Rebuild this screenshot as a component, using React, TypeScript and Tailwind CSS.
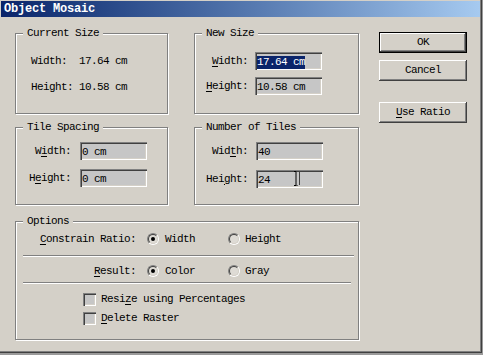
import React from "react";

const sunken =
  "shadow-[inset_1px_1px_0_#808080,inset_2px_2px_0_#404040,inset_-1px_-1px_0_#ffffff,inset_-2px_-2px_0_#d4d0c8]";
const raised =
  "shadow-[inset_-1px_-1px_0_#404040,inset_1px_1px_0_#ffffff,inset_-2px_-2px_0_#808080,inset_2px_2px_0_#d4d0c8]";

function Group({
  title,
  className,
  children,
}: {
  title: string;
  className: string;
  children?: React.ReactNode;
}) {
  return (
    <fieldset
      className={
        "border border-[#808080] shadow-[inset_1px_1px_0_#ffffff,1px_1px_0_#ffffff] " +
        className
      }
    >
      <legend className="ml-[7px] px-[4px] h-[14px] leading-[14px] bg-[#d4d0c8]">
        {title}
      </legend>
      {children}
    </fieldset>
  );
}

function U({ children }: { children: React.ReactNode }) {
  return <span className="underline underline-offset-[2px]">{children}</span>;
}

function Input({
  value,
  selected,
  className,
  children,
}: {
  value: string;
  selected?: boolean;
  className: string;
  children?: React.ReactNode;
}) {
  return (
    <div
      className={
        "relative h-[18px] bg-[#c6c6c6] pl-[2px] pt-[2px] flex items-center " +
        sunken +
        " " +
        className
      }
    >
      {selected ? (
        <span className="bg-[#0a246a] text-white leading-[13px] px-[0px]">{value}</span>
      ) : (
        <span className="leading-[13px]">{value}</span>
      )}
      {children}
    </div>
  );
}

function Radio({ checked }: { checked?: boolean }) {
  return (
    <div className="w-[12px] h-[12px] rounded-full border border-t-[#808080] border-l-[#808080] border-r-white border-b-white shrink-0">
      <div className="w-full h-full rounded-full border border-t-[#404040] border-l-[#404040] border-r-[#d4d0c8] border-b-[#d4d0c8] bg-[#dedbd5] flex items-center justify-center">
        {checked ? <div className="w-[4px] h-[4px] rounded-full bg-black" /> : null}
      </div>
    </div>
  );
}

function Check() {
  return <div className={"w-[13px] h-[13px] bg-[#c6c6c6] shrink-0 " + sunken} />;
}

export default function App() {
  return (
    <div className="w-[483px] h-[355px] bg-[#9a9a9a] text-black font-['Liberation_Mono',monospace] text-[11px] tracking-[-0.6px] overflow-hidden">
      <div className="w-[482px] h-[353px] bg-[#d4d0c8] flex flex-col pl-[1px] pt-[1px] shadow-[inset_-1px_-1px_0_#404040,inset_-2px_-2px_0_#808080]">
        <div className="h-[16px] w-[479px] bg-linear-to-r from-[#0a246a] to-[#a6caf0] text-white font-bold text-[12px] leading-[16px] pl-[3px] tracking-[-0.2px]">
          Object Mosaic
        </div>
        <div className="flex">
          <div className="ml-[14px] mt-[9px] w-[344px] flex flex-col">
            <div className="flex gap-[26px]">
              <Group title="Current Size" className="w-[153px] h-[88px]">
                <div className="pt-[12px] flex flex-col gap-[8px]">
                  <div className="flex items-center h-[18px] pl-[15px]">
                    <span className="w-[48px]">Width:</span>
                    <span>17.64 cm</span>
                  </div>
                  <div className="flex items-center h-[18px] pl-[15px]">
                    <span className="w-[48px]">Height:</span>
                    <span>10.58 cm</span>
                  </div>
                </div>
              </Group>
              <Group title="New Size" className="w-[165px] h-[88px]">
                <div className="pt-[12px] flex flex-col gap-[7px]">
                  <div className="flex items-center h-[18px]">
                    <span className="w-[53px] text-right">
                      <U>W</U>idth:
                    </span>
                    <Input value="17.64 cm" selected className="ml-[7px] w-[67px]" />
                  </div>
                  <div className="flex items-center h-[18px]">
                    <span className="w-[53px] text-right">
                      <U>H</U>eight:
                    </span>
                    <Input value="10.58 cm" className="ml-[7px] w-[67px]" />
                  </div>
                </div>
              </Group>
            </div>
            <div className="flex gap-[26px] mt-[6px]">
              <Group title="Tile Spacing" className="w-[153px] h-[85px]">
                <div className="pt-[8px] flex flex-col gap-[9px]">
                  <div className="flex items-center h-[18px]">
                    <span className="w-[55px] text-right">
                      W<U>i</U>dth:
                    </span>
                    <Input value="0 cm" className="ml-[9px] w-[67px]" />
                  </div>
                  <div className="flex items-center h-[18px]">
                    <span className="w-[55px] text-right">
                      H<U>e</U>ight:
                    </span>
                    <Input value="0 cm" className="ml-[9px] w-[67px]" />
                  </div>
                </div>
              </Group>
              <Group title="Number of Tiles" className="w-[165px] h-[85px]">
                <div className="pt-[8px] flex flex-col gap-[10px]">
                  <div className="flex items-center h-[18px]">
                    <span className="w-[53px] text-right">
                      Wid<U>t</U>h:
                    </span>
                    <Input value="40" className="ml-[8px] w-[67px]" />
                  </div>
                  <div className="flex items-center h-[18px]">
                    <span className="w-[53px] text-right">
                      Hei<U>g</U>ht:
                    </span>
                    <Input value="24" className="ml-[8px] w-[67px]">
                      <svg
                        className="absolute left-[37px] top-[0px]"
                        width="8"
                        height="18"
                        viewBox="0 0 8 18"
                      >
                        <path d="M1 1.5h2M3 1.5v14M1 15.5h2M3.5 15.5h1" stroke="#000" strokeWidth="1" fill="none" />
                        <path d="M6.5 2v13" stroke="#404040" strokeWidth="1" />
                      </svg>
                    </Input>
                  </div>
                </div>
              </Group>
            </div>
            <Group title="Options" className="w-[344px] h-[126px] mt-[9px]">
              <div className="flex flex-col">
                <div className="flex items-center h-[16px] mt-[3px]">
                  <span className="w-[120px] text-right">
                    <U>C</U>onstrain Ratio:
                  </span>
                  <div className="ml-[11px] w-[81px] flex items-center">
                    <Radio checked />
                    <span className="ml-[6px]">Width</span>
                  </div>
                  <div className="flex items-center">
                    <Radio />
                    <span className="ml-[5px]">Height</span>
                  </div>
                </div>
                <div className="ml-[7px] w-[331px] h-[2px] border-t border-t-[#808080] border-b border-b-white mt-[8px]" />
                <div className="flex items-center h-[16px] mt-[6px]">
                  <span className="w-[120px] text-right">
                    <U>R</U>esult:
                  </span>
                  <div className="ml-[11px] w-[81px] flex items-center">
                    <Radio checked />
                    <span className="ml-[6px]">Color</span>
                  </div>
                  <div className="flex items-center">
                    <Radio />
                    <span className="ml-[5px]">Gray</span>
                  </div>
                </div>
                <div className="ml-[7px] w-[328px] h-[2px] border-t border-t-[#808080] border-b border-b-white mt-[3px]" />
                <div className="flex items-center h-[13px] mt-[9px] pl-[67px]">
                  <Check />
                  <span className="ml-[5px]">
                    Resi<U>z</U>e using Percentages
                  </span>
                </div>
                <div className="flex items-center h-[13px] mt-[6px] pl-[67px]">
                  <Check />
                  <span className="ml-[5px]">
                    <U>D</U>elete Raster
                  </span>
                </div>
              </div>
            </Group>
          </div>
          <div className="ml-[20px] mt-[15px] w-[88px] flex flex-col">
            <div className="h-[21px] border border-black">
              <div className={"h-full flex items-center justify-center " + raised}>OK</div>
            </div>
            <div className={"h-[21px] mt-[7px] flex items-center justify-center " + raised}>Cancel</div>
            <div className={"h-[21px] mt-[21px] flex items-center justify-center " + raised}>
              <span>
                <U>U</U>se Ratio
              </span>
            </div>
          </div>
        </div>
      </div>
    </div>
  );
}
